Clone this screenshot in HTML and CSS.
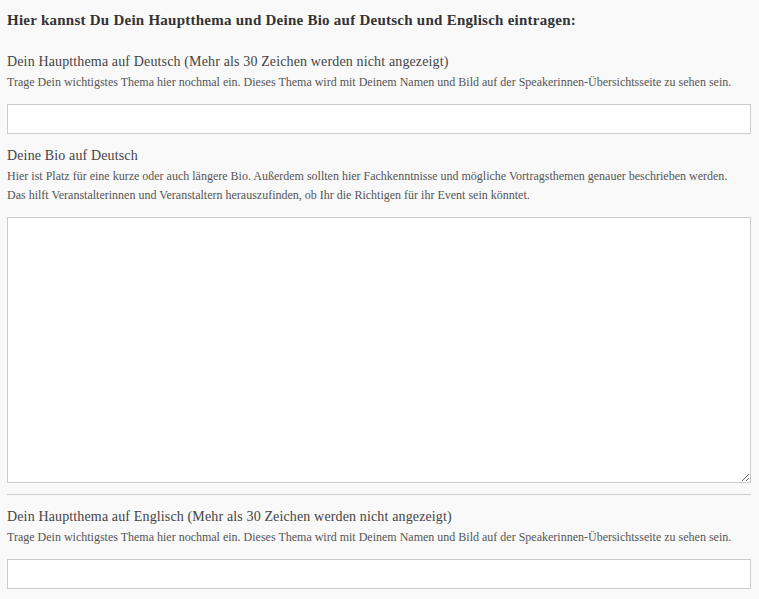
FILE: index.html
```html
<!DOCTYPE html>
<html lang="de">
<head>
<meta charset="utf-8">
<link rel="stylesheet" href="styles.css">
</head>
<body>
<form class="form">
  <h2 class="intro">Hier kannst Du Dein Hauptthema und Deine Bio auf Deutsch und Englisch eintragen:</h2>

  <div class="field">
    <label class="label">Dein Hauptthema auf Deutsch (Mehr als 30 Zeichen werden nicht angezeigt)</label>
    <p class="help">Trage Dein wichtigstes Thema hier nochmal ein. Dieses Thema wird mit Deinem Namen und Bild auf der Speakerinnen-Übersichtsseite zu sehen sein.</p>
    <input class="input" type="text">
  </div>

  <div class="field">
    <label class="label">Deine Bio auf Deutsch</label>
    <p class="help">Hier ist Platz für eine kurze oder auch längere Bio. Außerdem sollten hier Fachkenntnisse und mögliche Vortragsthemen genauer beschrieben werden. Das hilft Veranstalterinnen und Veranstaltern herauszufinden, ob Ihr die Richtigen für ihr Event sein könntet.</p>
    <textarea class="textarea"></textarea>
  </div>

  <hr class="divider">

  <div class="field">
    <label class="label">Dein Hauptthema auf Englisch (Mehr als 30 Zeichen werden nicht angezeigt)</label>
    <p class="help">Trage Dein wichtigstes Thema hier nochmal ein. Dieses Thema wird mit Deinem Namen und Bild auf der Speakerinnen-Übersichtsseite zu sehen sein.</p>
    <input class="input" type="text">
  </div>
</form>
</body>
</html>
```
FILE: styles.css
```css
html, body {
  margin: 0;
  padding: 0;
  background: #f9f9f9;
}
body {
  font-family: "Liberation Serif", "DejaVu Serif", serif;
  color: #444;
}
.form {
  padding: 10px 8px 10px 7px;
  display: flex;
  flex-direction: column;
}
.intro {
  margin: 0;
  font-size: 15px;
  line-height: 20px;
  letter-spacing: 0.25px;
  font-weight: bold;
  color: #333;
}
.field {
  display: flex;
  flex-direction: column;
}
.intro + .field {
  margin-top: 22px;
}
.field + .field {
  margin-top: 12px;
}
.label {
  font-size: 14px;
  line-height: 20px;
  letter-spacing: 0.14px;
  color: #444;
}
.help {
  margin: 1px 0 12px;
  padding-right: 10px;
  font-size: 12px;
  line-height: 19px;
  color: #555;
}
.input {
  box-sizing: border-box;
  height: 30px;
  margin: 0;
  border: 1px solid #ccc;
  background: #fff;
  width: 100%;
}
.textarea {
  box-sizing: border-box;
  height: 266px;
  margin: 0;
  border: 1px solid #ccc;
  background: #fff;
  width: 100%;
  resize: vertical;
}
.divider {
  margin: 11px 0 12px;
  border: 0;
  border-top: 1px solid #ccc;
  height: 0;
}
```
